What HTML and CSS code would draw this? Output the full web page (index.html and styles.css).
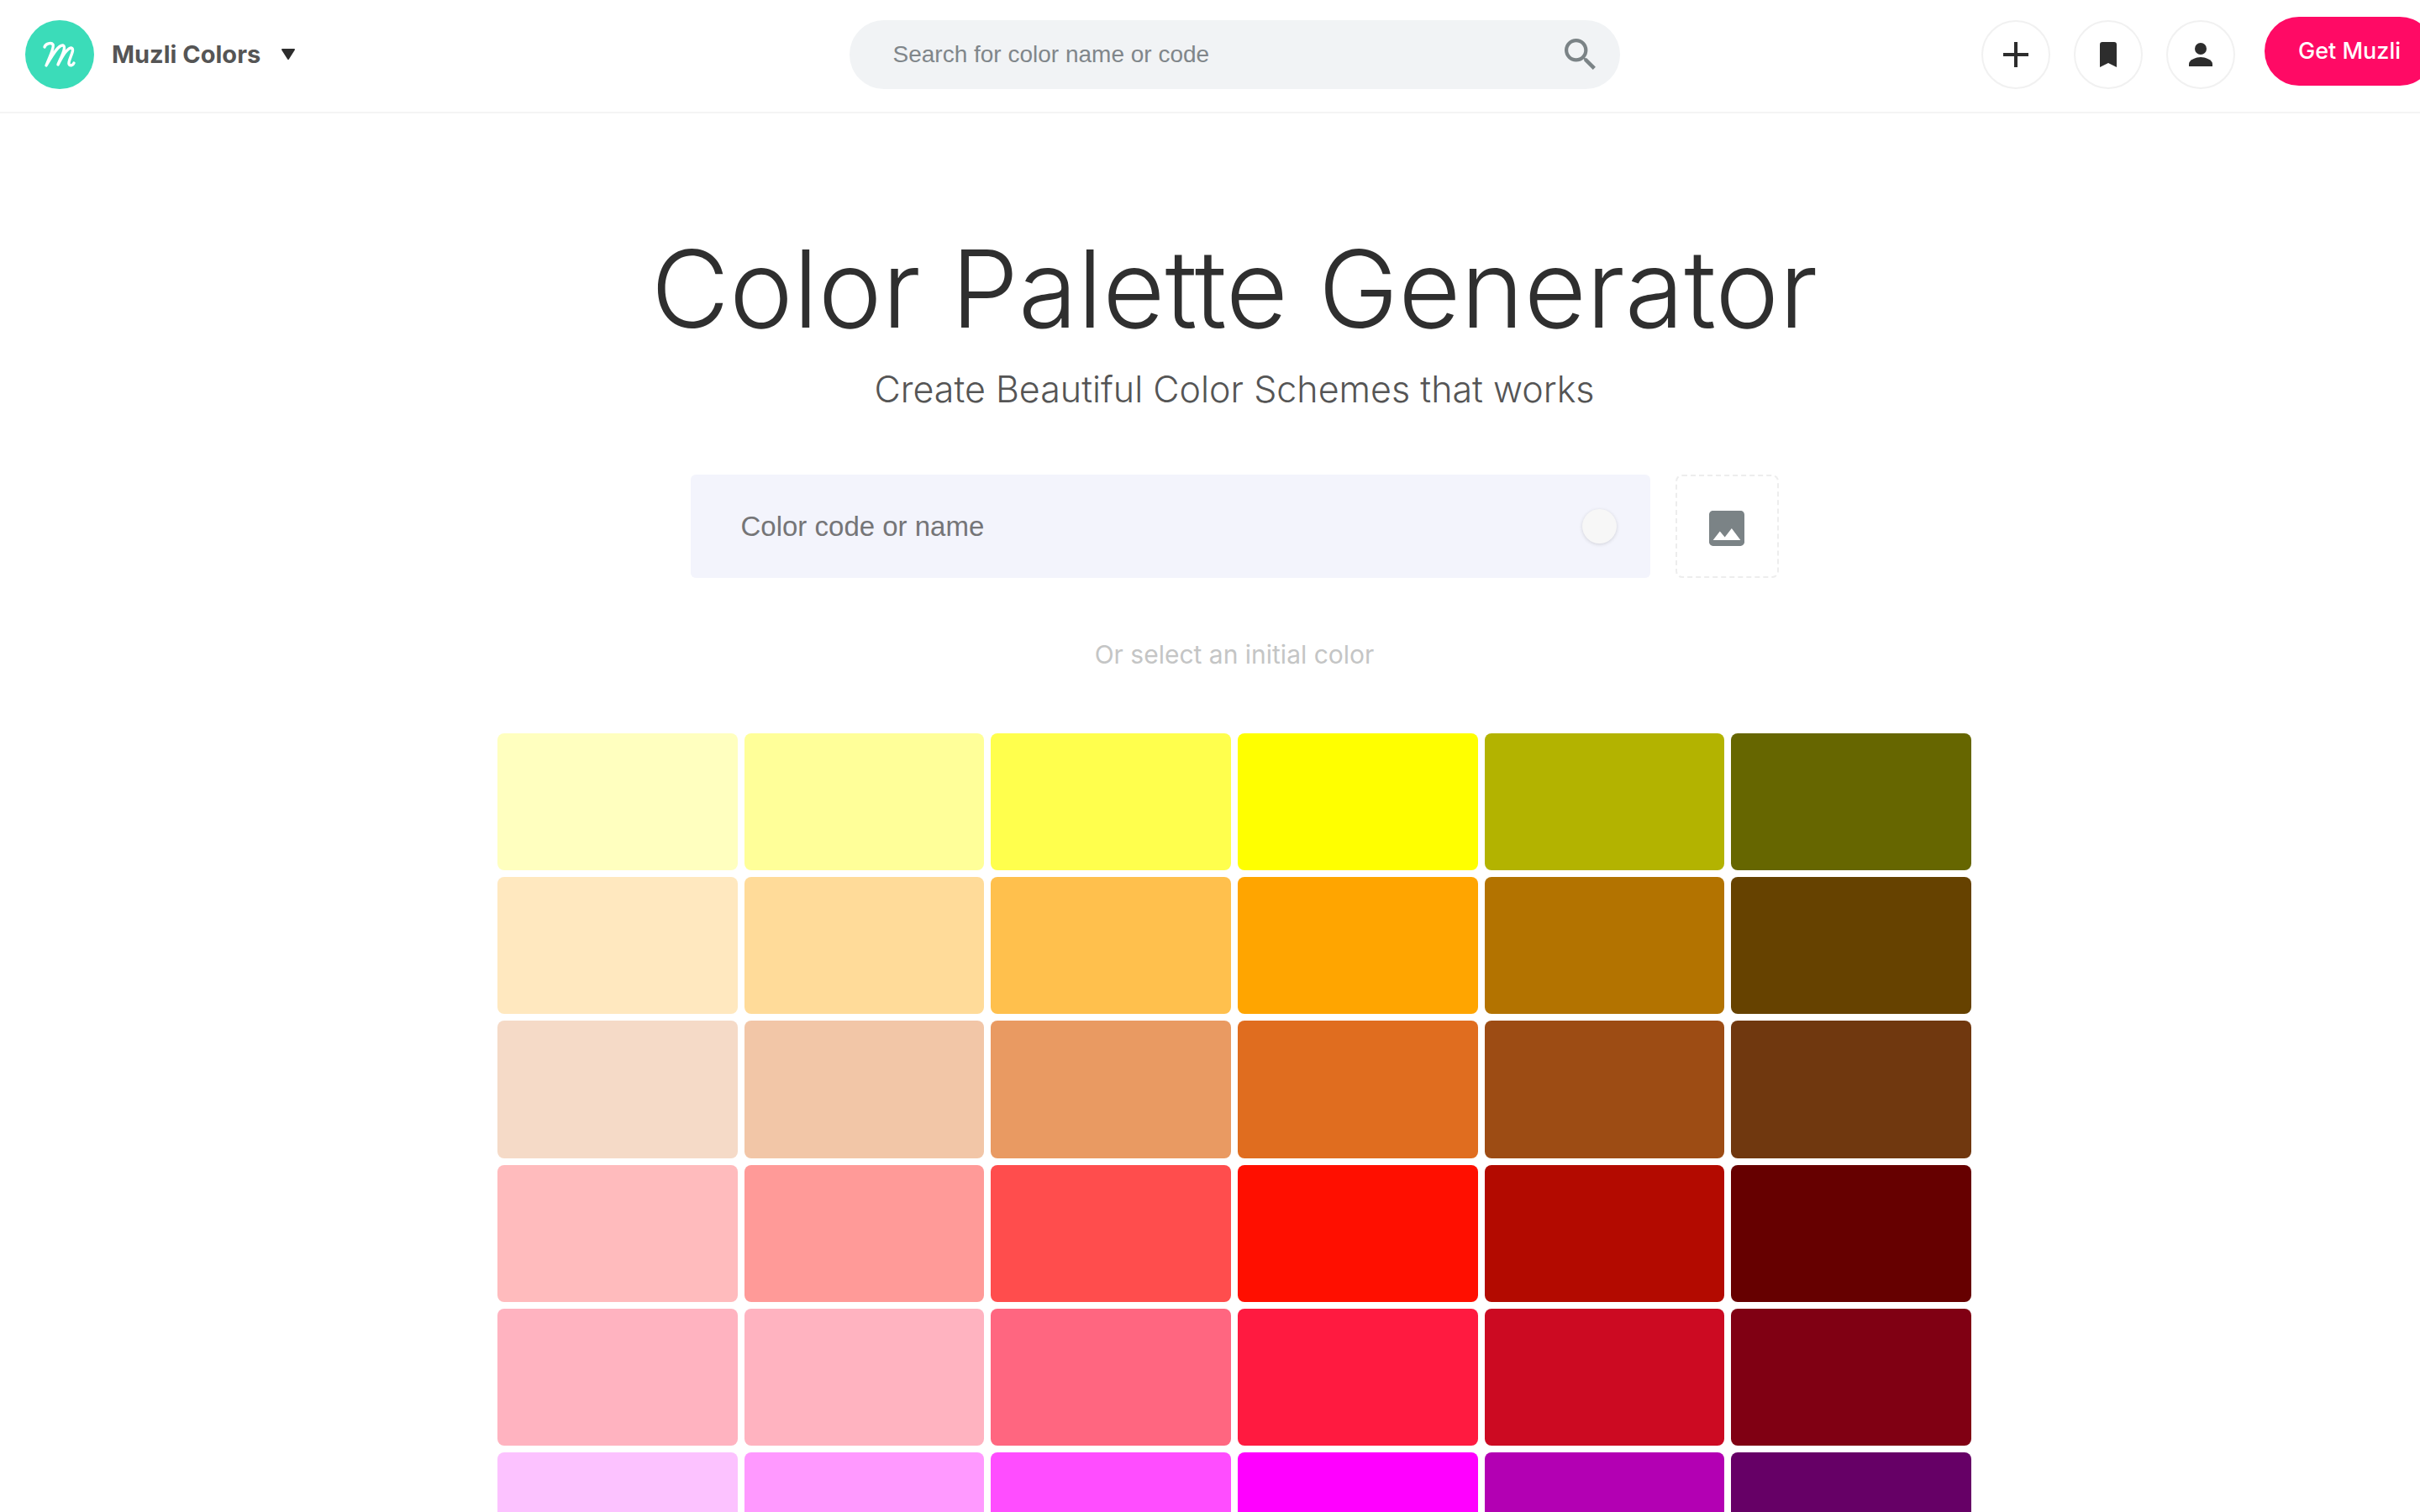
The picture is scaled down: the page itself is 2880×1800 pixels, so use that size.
FILE: index.html
```html
<!DOCTYPE html>
<html lang="en">
<head>
<meta charset="utf-8">
<title>Muzli Colors - Color Palette Generator</title>
<link rel="stylesheet" href="styles.css">
</head>
<body>
<div class="page">
  <header class="header">
    <button class="brand" type="button">
      <svg class="brand-logo" viewBox="0 0 82 82" aria-hidden="true">
        <circle cx="41" cy="41" r="41" fill="#3bdcb9"/>
        <path d="M23 32C24 28 31 26 33 29C35 33 27 48 25 54C31 44 39 29 45 30C50 32 41 47 39 53C43 45 50 33 55 33C60 35 51 47 52 52C53 55 57 54 58 51" fill="none" stroke="#fff" stroke-width="3.4" stroke-linecap="round" stroke-linejoin="round"/>
      </svg>
      <span class="brand-name">Muzli Colors</span>
      <svg class="brand-caret" viewBox="0 0 18 14" aria-hidden="true"><path d="M2 1H16L9 12Z" fill="#2d2d2d" stroke="#2d2d2d" stroke-width="2" stroke-linejoin="round"/></svg>
    </button>
    <form class="search">
      <input class="search-input" type="search" aria-label="Search" placeholder="Search for color name or code">
      <button class="search-button" type="submit" aria-label="Search">
        <svg viewBox="3 3 18 18" width="38" height="38"><path fill="#7b8386" d="M15.5 14h-.79l-.28-.27A6.47 6.47 0 0 0 16 9.5 6.5 6.5 0 1 0 9.5 16c1.61 0 3.09-.59 4.23-1.57l.27.28v.79l5 4.99L20.49 19l-4.99-5zm-6 0C7.01 14 5 11.99 5 9.5S7.01 5 9.5 5 14 7.01 14 9.5 11.99 14 9.5 14z"/></svg>
      </button>
    </form>
    <nav class="actions">
      <button class="round-button" type="button" aria-label="Create"><svg viewBox="0 0 30 30" width="30" height="30"><path d="M15 0V30M0 15H30" stroke="#2d2d2d" stroke-width="4"/></svg></button>
      <button class="round-button" type="button" aria-label="Saved palettes"><svg viewBox="0 0 20 30" width="20" height="30"><path d="M3 0H17Q20 0 20 3V30L10 25L0 30V3Q0 0 3 0Z" fill="#2d2d2d"/></svg></button>
      <button class="round-button" type="button" aria-label="Account"><svg viewBox="0 0 28 28" width="28" height="28"><circle cx="14" cy="7" r="7" fill="#2d2d2d"/><path d="M0 28V25C0 20 9 17 14 17S28 20 28 25V28Z" fill="#2d2d2d"/></svg></button>
      <a class="get-muzli" href="#">Get Muzli</a>
    </nav>
  </header>
  <main class="main">
    <h1 class="title">Color Palette Generator</h1>
    <p class="subtitle">Create Beautiful Color Schemes that works</p>
    <form class="picker">
      <div class="color-field">
        <input class="color-input" type="text" aria-label="Color code or name" placeholder="Color code or name">
        <button class="color-dot" type="button" aria-label="Pick a color"></button>
      </div>
      <button class="image-button" type="button" aria-label="Upload an image">
        <svg viewBox="3 3 18 18" width="42" height="42"><path fill="#7b8386" d="M21 19V5c0-1.100-.9-2-2-2H5c-1.100 0-2 .9-2 2v14c0 1.100.9 2 2 2h14c1.100 0 2-.9 2-2zM8.500 13.500l2.500 3.010L14.500 12l4.500 6H5l3.500-4.500z"/></svg>
      </button>
    </form>
    <p class="hint">Or select an initial color</p>
    <div class="swatches" id="swatches"></div>
  </main>
</div>
<script src="swatches.js"></script>
</body>
</html>
```
FILE: styles.css
```css
* { box-sizing: border-box; }

html { overflow: hidden; }

body {
  margin: 0;
  background: #fff;
  color: #2f2f2f;
  font-family: Inter, "Noto Sans", sans-serif;
}

button, input { font: inherit; border: 0; margin: 0; }
button { padding: 0; background: none; cursor: pointer; }
svg { display: block; flex: none; }

/* The header and content run a little wider than the window. */
.page { width: calc(100% + 58px); }

.header {
  display: grid;
  grid-template-columns: 1fr 917px 1fr;
  align-items: center;
  height: 135px;
  padding: 0 30px 4px;
  border-bottom: 2px solid #f4f4f4;
}

.brand {
  display: flex;
  align-items: center;
  justify-self: start;
}
.brand-logo { width: 82px; height: 82px; }
.brand-name {
  margin: 0 24px 0 21px;
  font-size: 29px;
  font-weight: 700;
  color: #555;
}
.brand-caret { width: 18px; height: 14px; }

.search {
  display: flex;
  align-items: center;
  height: 82px;
  padding: 0 28px 0 52px;
  border-radius: 41px;
  background: #f1f3f5;
}
.search-input {
  flex: 1;
  padding: 0;
  background: none;
  font-family: "Liberation Sans", Arial, sans-serif;
  font-size: 28px;
  outline: 0;
}
.search-input::placeholder { color: #80868a; }

.actions {
  display: flex;
  align-items: center;
  justify-self: end;
  gap: 28px;
  margin-right: 11px;
}
.round-button {
  display: flex;
  align-items: center;
  justify-content: center;
  width: 82px;
  height: 82px;
  border: 2px solid #f1f1f1;
  border-radius: 50%;
}
.get-muzli {
  margin: 0 0 8px 7px;
  padding: 0 40px;
  border-radius: 41px;
  background: #ff0a65;
  color: #fff;
  font-size: 27px;
  font-weight: 500;
  line-height: 82px;
  text-decoration: none;
  white-space: nowrap;
}

.main {
  display: flex;
  flex-direction: column;
  align-items: center;
  padding-top: 134px;
}
.title {
  margin: 0;
  font-size: 128px;
  font-weight: 300;
  line-height: 150px;
}
.subtitle {
  margin: 12px 0 0;
  color: #555;
  font-size: 43px;
  font-weight: 300;
  line-height: 64px;
}

.picker {
  display: flex;
  gap: 30px;
  margin-top: 70px;
}
.color-field {
  display: flex;
  align-items: center;
  width: 1142px;
  height: 123px;
  padding: 0 40px 0 60px;
  border-radius: 6px;
  background: #f3f4fc;
}
.color-input {
  flex: 1;
  padding: 0;
  background: none;
  font-family: "Liberation Sans", Arial, sans-serif;
  font-size: 33px;
  outline: 0;
}
.color-input::placeholder { color: #757577; }
.color-dot {
  width: 41px;
  height: 41px;
  border-radius: 50%;
  background: #f7f7f7;
  box-shadow: 0 1px 4px rgba(0, 0, 0, .14);
}
.image-button {
  display: flex;
  align-items: center;
  justify-content: center;
  width: 123px;
  height: 123px;
  padding-top: 4px;
  border: 2px dashed #ededed;
  border-radius: 8px;
}

.hint {
  margin: 71px 0 74px;
  color: #c4c5c5;
  font-size: 30px;
  line-height: 40px;
}

.swatches {
  display: grid;
  grid-template-columns: repeat(6, 1fr);
  gap: 8px;
  width: 1754px;
}
.swatch {
  aspect-ratio: 7 / 4;
  border-radius: 8px;
}
```
FILE: swatches.js
```js
const colors = [
  "#ffffbf", "#ffff99", "#ffff4d", "#ffff00", "#b3b300", "#666600",
  "#ffe8bf", "#ffdb99", "#ffc04d", "#ffa500", "#b37300", "#664200",
  "#f5dac7", "#f2c6a7", "#e99a62", "#e06d1f", "#9d4c14", "#70380f",
  "#ffbbbd", "#ff9a98", "#ff4d4d", "#ff0f00", "#b30a00", "#660000",
  "#ffb3c0", "#ffb3c0", "#ff6680", "#ff1a40", "#cc0a22", "#800013",
  "#fcc2ff", "#ff99ff", "#ff4dff", "#ff00ff", "#b300b3", "#660066"
];

const grid = document.getElementById("swatches");
for (const color of colors) {
  const swatch = document.createElement("button");
  swatch.type = "button";
  swatch.className = "swatch";
  swatch.style.backgroundColor = color;
  swatch.setAttribute("aria-label", color);
  grid.append(swatch);
}
```
